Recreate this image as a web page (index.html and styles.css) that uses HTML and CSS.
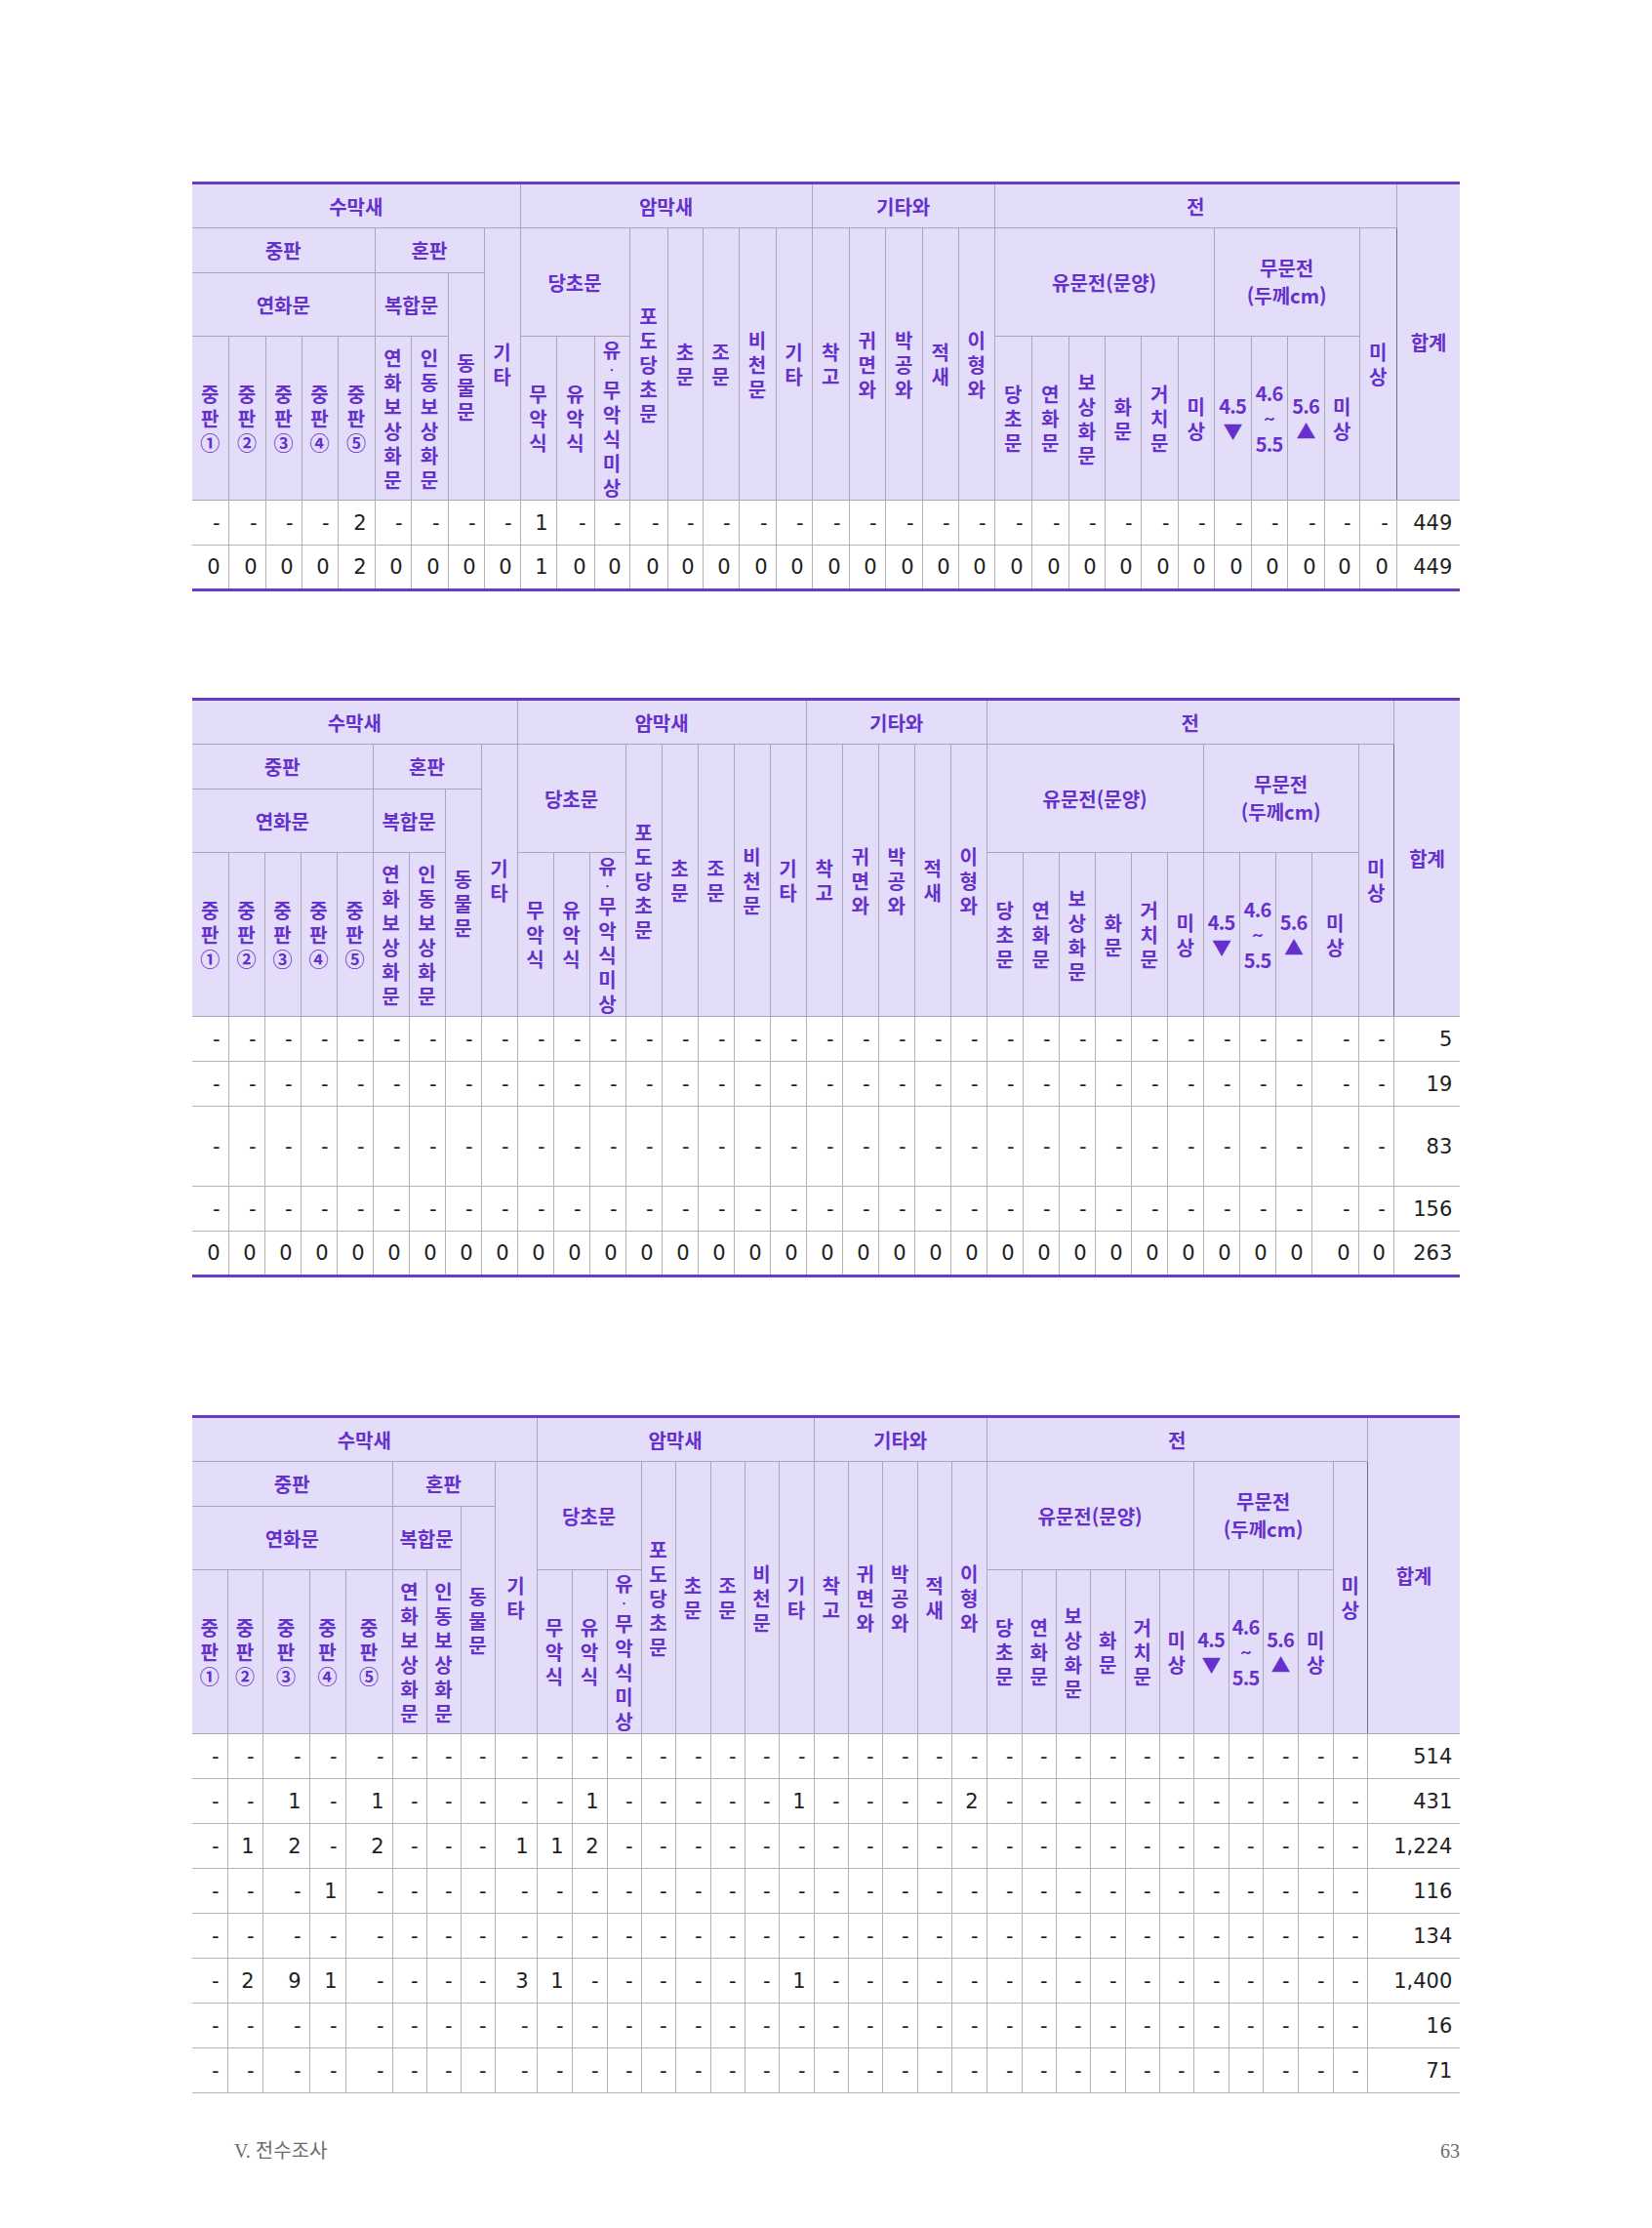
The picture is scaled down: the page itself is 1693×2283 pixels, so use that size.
FILE: index.html
```html
<!DOCTYPE html>
<html lang="ko">
<head>
<meta charset="utf-8">
<title>V. 전수조사 63</title>
<link rel="stylesheet" href="styles.css">
</head>
<body>
<div class="page">

<table class="tbl t1">
<colgroup>
<col class="w37"><col class="w38"><col class="w37"><col class="w37"><col class="w38"><col class="w37"><col class="w38"><col class="w37"><col class="w37"><col class="w37">
<col class="w39"><col class="w36"><col class="w39"><col class="w36"><col class="w37"><col class="w38"><col class="w37"><col class="w38"><col class="w37"><col class="w38">
<col class="w37"><col class="w37"><col class="w38"><col class="w38"><col class="w37"><col class="w37"><col class="w38"><col class="w37"><col class="w38"><col class="w37">
<col class="w38"><col class="w36"><col class="w38"><col class="w65">
</colgroup>
<thead>
<tr class="h1"><th colspan="9">수막새</th><th colspan="8">암막새</th><th colspan="5">기타와</th><th colspan="11">전</th><th rowspan="4" class="sum">합계</th></tr>
<tr class="h2"><th colspan="5">중판</th><th colspan="3">혼판</th><th rowspan="3">기<br>타</th><th colspan="3" rowspan="2">당초문</th><th rowspan="3">포<br>도<br>당<br>초<br>문</th><th rowspan="3">초<br>문</th><th rowspan="3">조<br>문</th><th rowspan="3">비<br>천<br>문</th><th rowspan="3">기<br>타</th><th rowspan="3">착<br>고</th><th rowspan="3">귀<br>면<br>와</th><th rowspan="3">박<br>공<br>와</th><th rowspan="3">적<br>새</th><th rowspan="3">이<br>형<br>와</th><th colspan="6" rowspan="2">유문전(문양)</th><th colspan="4" rowspan="2" class="two">무문전<br>(두께cm)</th><th rowspan="3">미<br>상</th></tr>
<tr class="h3"><th colspan="5">연화문</th><th colspan="2">복합문</th><th rowspan="2">동<br>물<br>문</th></tr>
<tr class="h4"><th>중<br>판<br>①</th><th>중<br>판<br>②</th><th>중<br>판<br>③</th><th>중<br>판<br>④</th><th>중<br>판<br>⑤</th><th>연<br>화<br>보<br>상<br>화<br>문</th><th>인<br>동<br>보<br>상<br>화<br>문</th><th>무<br>악<br>식</th><th>유<br>악<br>식</th><th>유<span class="dot">·</span>무<br>악<br>식<br>미<br>상</th><th>당<br>초<br>문</th><th>연<br>화<br>문</th><th>보<br>상<br>화<br>문</th><th>화<br>문</th><th>거<br>치<br>문</th><th>미<br>상</th><th class="num">4.5<br>▼</th><th class="num">4.6<br>~<br>5.5</th><th class="num">5.6<br>▲</th><th>미<br>상</th></tr>
</thead>
<tbody>
<tr class="dr"><td>-</td><td>-</td><td>-</td><td>-</td><td>2</td><td>-</td><td>-</td><td>-</td><td>-</td><td>1</td><td>-</td><td>-</td><td>-</td><td>-</td><td>-</td><td>-</td><td>-</td><td>-</td><td>-</td><td>-</td><td>-</td><td>-</td><td>-</td><td>-</td><td>-</td><td>-</td><td>-</td><td>-</td><td>-</td><td>-</td><td>-</td><td>-</td><td>-</td><td class="sum">449</td></tr>
<tr class="dr tot"><td>0</td><td>0</td><td>0</td><td>0</td><td>2</td><td>0</td><td>0</td><td>0</td><td>0</td><td>1</td><td>0</td><td>0</td><td>0</td><td>0</td><td>0</td><td>0</td><td>0</td><td>0</td><td>0</td><td>0</td><td>0</td><td>0</td><td>0</td><td>0</td><td>0</td><td>0</td><td>0</td><td>0</td><td>0</td><td>0</td><td>0</td><td>0</td><td>0</td><td class="sum">449</td></tr>
</tbody>
</table>

<table class="tbl t2">
<colgroup>
<col class="w37"><col class="w37"><col class="w37"><col class="w37"><col class="w37"><col class="w37"><col class="w37"><col class="w37"><col class="w37"><col class="w37">
<col class="w37"><col class="w37"><col class="w37"><col class="w37"><col class="w37"><col class="w37"><col class="w37"><col class="w37"><col class="w37"><col class="w37">
<col class="w37"><col class="w37"><col class="w37"><col class="w37"><col class="w37"><col class="w37"><col class="w37"><col class="w37"><col class="w37"><col class="w37">
<col class="w37"><col class="w48"><col class="w36"><col class="w68">
</colgroup>
<thead>
<tr class="h1"><th colspan="9">수막새</th><th colspan="8">암막새</th><th colspan="5">기타와</th><th colspan="11">전</th><th rowspan="4" class="sum">합계</th></tr>
<tr class="h2"><th colspan="5">중판</th><th colspan="3">혼판</th><th rowspan="3">기<br>타</th><th colspan="3" rowspan="2">당초문</th><th rowspan="3">포<br>도<br>당<br>초<br>문</th><th rowspan="3">초<br>문</th><th rowspan="3">조<br>문</th><th rowspan="3">비<br>천<br>문</th><th rowspan="3">기<br>타</th><th rowspan="3">착<br>고</th><th rowspan="3">귀<br>면<br>와</th><th rowspan="3">박<br>공<br>와</th><th rowspan="3">적<br>새</th><th rowspan="3">이<br>형<br>와</th><th colspan="6" rowspan="2">유문전(문양)</th><th colspan="4" rowspan="2" class="two">무문전<br>(두께cm)</th><th rowspan="3">미<br>상</th></tr>
<tr class="h3"><th colspan="5">연화문</th><th colspan="2">복합문</th><th rowspan="2">동<br>물<br>문</th></tr>
<tr class="h4"><th>중<br>판<br>①</th><th>중<br>판<br>②</th><th>중<br>판<br>③</th><th>중<br>판<br>④</th><th>중<br>판<br>⑤</th><th>연<br>화<br>보<br>상<br>화<br>문</th><th>인<br>동<br>보<br>상<br>화<br>문</th><th>무<br>악<br>식</th><th>유<br>악<br>식</th><th>유<span class="dot">·</span>무<br>악<br>식<br>미<br>상</th><th>당<br>초<br>문</th><th>연<br>화<br>문</th><th>보<br>상<br>화<br>문</th><th>화<br>문</th><th>거<br>치<br>문</th><th>미<br>상</th><th class="num">4.5<br>▼</th><th class="num">4.6<br>~<br>5.5</th><th class="num">5.6<br>▲</th><th>미<br>상</th></tr>
</thead>
<tbody>
<tr class="dr"><td>-</td><td>-</td><td>-</td><td>-</td><td>-</td><td>-</td><td>-</td><td>-</td><td>-</td><td>-</td><td>-</td><td>-</td><td>-</td><td>-</td><td>-</td><td>-</td><td>-</td><td>-</td><td>-</td><td>-</td><td>-</td><td>-</td><td>-</td><td>-</td><td>-</td><td>-</td><td>-</td><td>-</td><td>-</td><td>-</td><td>-</td><td>-</td><td>-</td><td class="sum">5</td></tr>
<tr class="dr"><td>-</td><td>-</td><td>-</td><td>-</td><td>-</td><td>-</td><td>-</td><td>-</td><td>-</td><td>-</td><td>-</td><td>-</td><td>-</td><td>-</td><td>-</td><td>-</td><td>-</td><td>-</td><td>-</td><td>-</td><td>-</td><td>-</td><td>-</td><td>-</td><td>-</td><td>-</td><td>-</td><td>-</td><td>-</td><td>-</td><td>-</td><td>-</td><td>-</td><td class="sum">19</td></tr>
<tr class="dr tall"><td>-</td><td>-</td><td>-</td><td>-</td><td>-</td><td>-</td><td>-</td><td>-</td><td>-</td><td>-</td><td>-</td><td>-</td><td>-</td><td>-</td><td>-</td><td>-</td><td>-</td><td>-</td><td>-</td><td>-</td><td>-</td><td>-</td><td>-</td><td>-</td><td>-</td><td>-</td><td>-</td><td>-</td><td>-</td><td>-</td><td>-</td><td>-</td><td>-</td><td class="sum">83</td></tr>
<tr class="dr"><td>-</td><td>-</td><td>-</td><td>-</td><td>-</td><td>-</td><td>-</td><td>-</td><td>-</td><td>-</td><td>-</td><td>-</td><td>-</td><td>-</td><td>-</td><td>-</td><td>-</td><td>-</td><td>-</td><td>-</td><td>-</td><td>-</td><td>-</td><td>-</td><td>-</td><td>-</td><td>-</td><td>-</td><td>-</td><td>-</td><td>-</td><td>-</td><td>-</td><td class="sum">156</td></tr>
<tr class="dr tot"><td>0</td><td>0</td><td>0</td><td>0</td><td>0</td><td>0</td><td>0</td><td>0</td><td>0</td><td>0</td><td>0</td><td>0</td><td>0</td><td>0</td><td>0</td><td>0</td><td>0</td><td>0</td><td>0</td><td>0</td><td>0</td><td>0</td><td>0</td><td>0</td><td>0</td><td>0</td><td>0</td><td>0</td><td>0</td><td>0</td><td>0</td><td>0</td><td>0</td><td class="sum">263</td></tr>
</tbody>
</table>

<table class="tbl t3">
<colgroup>
<col class="w36"><col class="w36"><col class="w48"><col class="w37"><col class="w48"><col class="w35"><col class="w35"><col class="w35"><col class="w43">
<col class="w36"><col class="w36"><col class="w35"><col class="w35"><col class="w36"><col class="w35"><col class="w35"><col class="w36">
<col class="w35"><col class="w35"><col class="w36"><col class="w35"><col class="w36">
<col class="w36"><col class="w35"><col class="w35"><col class="w36"><col class="w35"><col class="w35"><col class="w36"><col class="w35"><col class="w36"><col class="w36"><col class="w35">
<col class="w95">
</colgroup>
<thead>
<tr class="h1"><th colspan="9">수막새</th><th colspan="8">암막새</th><th colspan="5">기타와</th><th colspan="11">전</th><th rowspan="4" class="sum">합계</th></tr>
<tr class="h2"><th colspan="5">중판</th><th colspan="3">혼판</th><th rowspan="3">기<br>타</th><th colspan="3" rowspan="2">당초문</th><th rowspan="3">포<br>도<br>당<br>초<br>문</th><th rowspan="3">초<br>문</th><th rowspan="3">조<br>문</th><th rowspan="3">비<br>천<br>문</th><th rowspan="3">기<br>타</th><th rowspan="3">착<br>고</th><th rowspan="3">귀<br>면<br>와</th><th rowspan="3">박<br>공<br>와</th><th rowspan="3">적<br>새</th><th rowspan="3">이<br>형<br>와</th><th colspan="6" rowspan="2">유문전(문양)</th><th colspan="4" rowspan="2" class="two">무문전<br>(두께cm)</th><th rowspan="3">미<br>상</th></tr>
<tr class="h3"><th colspan="5">연화문</th><th colspan="2">복합문</th><th rowspan="2">동<br>물<br>문</th></tr>
<tr class="h4"><th>중<br>판<br>①</th><th>중<br>판<br>②</th><th>중<br>판<br>③</th><th>중<br>판<br>④</th><th>중<br>판<br>⑤</th><th>연<br>화<br>보<br>상<br>화<br>문</th><th>인<br>동<br>보<br>상<br>화<br>문</th><th>무<br>악<br>식</th><th>유<br>악<br>식</th><th>유<span class="dot">·</span>무<br>악<br>식<br>미<br>상</th><th>당<br>초<br>문</th><th>연<br>화<br>문</th><th>보<br>상<br>화<br>문</th><th>화<br>문</th><th>거<br>치<br>문</th><th>미<br>상</th><th class="num">4.5<br>▼</th><th class="num">4.6<br>~<br>5.5</th><th class="num">5.6<br>▲</th><th>미<br>상</th></tr>
</thead>
<tbody>
<tr class="dr"><td>-</td><td>-</td><td>-</td><td>-</td><td>-</td><td>-</td><td>-</td><td>-</td><td>-</td><td>-</td><td>-</td><td>-</td><td>-</td><td>-</td><td>-</td><td>-</td><td>-</td><td>-</td><td>-</td><td>-</td><td>-</td><td>-</td><td>-</td><td>-</td><td>-</td><td>-</td><td>-</td><td>-</td><td>-</td><td>-</td><td>-</td><td>-</td><td>-</td><td class="sum">514</td></tr>
<tr class="dr"><td>-</td><td>-</td><td>1</td><td>-</td><td>1</td><td>-</td><td>-</td><td>-</td><td>-</td><td>-</td><td>1</td><td>-</td><td>-</td><td>-</td><td>-</td><td>-</td><td>1</td><td>-</td><td>-</td><td>-</td><td>-</td><td>2</td><td>-</td><td>-</td><td>-</td><td>-</td><td>-</td><td>-</td><td>-</td><td>-</td><td>-</td><td>-</td><td>-</td><td class="sum">431</td></tr>
<tr class="dr"><td>-</td><td>1</td><td>2</td><td>-</td><td>2</td><td>-</td><td>-</td><td>-</td><td>1</td><td>1</td><td>2</td><td>-</td><td>-</td><td>-</td><td>-</td><td>-</td><td>-</td><td>-</td><td>-</td><td>-</td><td>-</td><td>-</td><td>-</td><td>-</td><td>-</td><td>-</td><td>-</td><td>-</td><td>-</td><td>-</td><td>-</td><td>-</td><td>-</td><td class="sum">1,224</td></tr>
<tr class="dr"><td>-</td><td>-</td><td>-</td><td>1</td><td>-</td><td>-</td><td>-</td><td>-</td><td>-</td><td>-</td><td>-</td><td>-</td><td>-</td><td>-</td><td>-</td><td>-</td><td>-</td><td>-</td><td>-</td><td>-</td><td>-</td><td>-</td><td>-</td><td>-</td><td>-</td><td>-</td><td>-</td><td>-</td><td>-</td><td>-</td><td>-</td><td>-</td><td>-</td><td class="sum">116</td></tr>
<tr class="dr"><td>-</td><td>-</td><td>-</td><td>-</td><td>-</td><td>-</td><td>-</td><td>-</td><td>-</td><td>-</td><td>-</td><td>-</td><td>-</td><td>-</td><td>-</td><td>-</td><td>-</td><td>-</td><td>-</td><td>-</td><td>-</td><td>-</td><td>-</td><td>-</td><td>-</td><td>-</td><td>-</td><td>-</td><td>-</td><td>-</td><td>-</td><td>-</td><td>-</td><td class="sum">134</td></tr>
<tr class="dr"><td>-</td><td>2</td><td>9</td><td>1</td><td>-</td><td>-</td><td>-</td><td>-</td><td>3</td><td>1</td><td>-</td><td>-</td><td>-</td><td>-</td><td>-</td><td>-</td><td>1</td><td>-</td><td>-</td><td>-</td><td>-</td><td>-</td><td>-</td><td>-</td><td>-</td><td>-</td><td>-</td><td>-</td><td>-</td><td>-</td><td>-</td><td>-</td><td>-</td><td class="sum">1,400</td></tr>
<tr class="dr"><td>-</td><td>-</td><td>-</td><td>-</td><td>-</td><td>-</td><td>-</td><td>-</td><td>-</td><td>-</td><td>-</td><td>-</td><td>-</td><td>-</td><td>-</td><td>-</td><td>-</td><td>-</td><td>-</td><td>-</td><td>-</td><td>-</td><td>-</td><td>-</td><td>-</td><td>-</td><td>-</td><td>-</td><td>-</td><td>-</td><td>-</td><td>-</td><td>-</td><td class="sum">16</td></tr>
<tr class="dr last"><td>-</td><td>-</td><td>-</td><td>-</td><td>-</td><td>-</td><td>-</td><td>-</td><td>-</td><td>-</td><td>-</td><td>-</td><td>-</td><td>-</td><td>-</td><td>-</td><td>-</td><td>-</td><td>-</td><td>-</td><td>-</td><td>-</td><td>-</td><td>-</td><td>-</td><td>-</td><td>-</td><td>-</td><td>-</td><td>-</td><td>-</td><td>-</td><td>-</td><td class="sum">71</td></tr>
</tbody>
</table>

<footer class="foot">
<span class="chap">V. 전수조사</span>
<span class="pno">63</span>
</footer>

</div>
</body>
</html>
```

FILE: styles.css
```css
html, body {
  margin: 0;
  padding: 0;
  background: #ffffff;
}

.page {
  width: 1693px;
  height: 2283px;
  box-sizing: border-box;
  padding-top: 186px;
  overflow: hidden;
}

.tbl {
  margin-left: 197px;
  width: 1299px;
  table-layout: fixed;
  border-collapse: collapse;
  border-spacing: 0;
}

.t2 { margin-top: 109px; }
.t3 { margin-top: 141px; }

.w35 { width: 35px; }
.w36 { width: 36px; }
.w37 { width: 37px; }
.w38 { width: 38px; }
.w39 { width: 39px; }
.w43 { width: 43px; }
.w48 { width: 48px; }
.w65 { width: 65px; }
.w68 { width: 68px; }
.w95 { width: 95px; }

.tbl th {
  background: #e3ddfa;
  color: #6530cc;
  font-family: "Noto Sans CJK KR", "Noto Sans", sans-serif;
  font-weight: 700;
  font-size: 20px;
  line-height: 25px;
  text-align: center;
  vertical-align: middle;
  padding: 0;
  border: 1px solid #aaa6b8;
  overflow: hidden;
  white-space: nowrap;
}

.tbl .h1 th {
  border-top: 3px solid #6a3bc9;
}

.tbl tr > :first-child {
  border-left: none;
}

.tbl .sum {
  border-right: none;
  border-left: 1px solid #6e6e78;
}

.tbl th.two {
  line-height: 28px;
}

.tbl th.num {
  font-size: 20px;
  letter-spacing: -0.8px;
  line-height: 26px;
}

.tbl .dot {
  display: block;
  font-size: 12px;
  line-height: 16px;
}

.h1 { height: 46px; }
.h2 { height: 46px; }
.h3 { height: 65px; }
.h4 { height: 168px; }
.dr { height: 46px; }
.dr.tall { height: 82px; }

.tbl td {
  font-family: "DejaVu Sans", "Noto Sans CJK KR", sans-serif;
  font-size: 21px;
  color: #1e1e1e;
  text-align: right;
  vertical-align: middle;
  padding: 0 8px 0 0;
  border: 1px solid #b4b4b8;
  white-space: nowrap;
}

.tbl tr.tot td {
  border-top: 1px solid #707070;
  border-bottom: 3px solid #6a3bc9;
}

.tbl tr.last td {
  border-bottom: 1px solid #b4b4b8;
}

.foot {
  margin: 46px 0 0 240px;
  width: 1256px;
  display: flex;
  justify-content: space-between;
  align-items: baseline;
  font-family: "Liberation Serif", "Noto Sans CJK KR", serif;
  font-size: 20px;
  line-height: 26px;
  color: #6c6c6c;
}

.chap {
  font-weight: 400;
}

.pno {
  font-weight: 400;
}
```
